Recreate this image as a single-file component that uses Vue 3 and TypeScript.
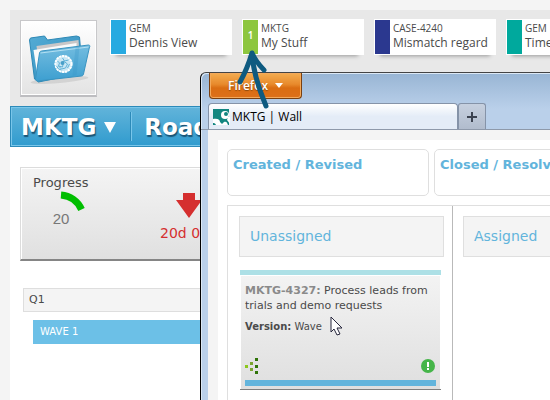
<script setup lang="ts">
interface Shortcut {
  project: string
  title: string
  color: string
  badge?: string
}

const shortcuts: Shortcut[] = [
  { project: 'GEM', title: 'Dennis View', color: '#27aae1' },
  { project: 'MKTG', title: 'My Stuff', color: '#8dc63f', badge: '1' },
  { project: 'CASE-4240', title: 'Mismatch regard', color: '#2b388f' },
  { project: 'GEM', title: 'Time', color: '#00a99d' },
]

const statuses: string[] = ['Created / Revised', 'Closed / Resolved']
</script>

<template>
  <div class="desktop">
    <main class="app">
      <header class="top">
        <a class="logo" href="#" aria-label="Home">
          <svg width="70" height="70" viewBox="0 0 70 70">
            <defs>
              <linearGradient id="front" x1="0" y1="0" x2="0" y2="1">
                <stop offset="0" stop-color="#74bde0" />
                <stop offset="1" stop-color="#3d9fd0" />
              </linearGradient>
              <linearGradient id="back" x1="0" y1="0" x2="1" y2="1">
                <stop offset="0" stop-color="#54abd4" />
                <stop offset="1" stop-color="#2f8dbd" />
              </linearGradient>
            </defs>
            <ellipse cx="36" cy="57" rx="29" ry="3" fill="#c4c4c4" opacity=".6" transform="rotate(-5 36 57)" />
            <path d="M6 17l1-2 14-2 3 4 29-4 3 1 3 36-44 9-4-3z" fill="url(#back)" stroke="#2d88b5" />
            <path d="M13 23l42-6 2 26-40 9z" fill="#c9c7c8" />
            <path d="M10 27l43-7v24L14 54z" fill="#fafafa" />
            <path d="M16 30c0-1 1-2 2-2l47-6c1 0 2 1 1 2l-6 27c0 1-1 2-2 2l-44 5c-1 0-2-1-2-2z" fill="url(#front)" stroke="#3a94c1" />
            <path d="M17 30l48-6" stroke="#b4e0f2" fill="none" />
            <path d="M52 25l4-1-3 28-4 1z" fill="#3795c8" opacity=".3" />
            <circle cx="40" cy="41" r="9" fill="#c9e7f4" />
            <circle cx="40" cy="41" r="8" fill="none" stroke="#fff" stroke-width="2" stroke-dasharray="2 1" />
            <path d="M34 38l2 2-1 3 4 1 1-6 4 3-2 4-4 1-3-3M39 35l2 3 4-1M33 43l2 3 3 1M44 45l2-4" fill="none" stroke="#61b2d7" />
            <circle cx="39" cy="40" r="2" fill="#499fc9" />
          </svg>
        </a>
        <nav class="shortcuts">
          <a v-for="(s, i) in shortcuts" :key="i" class="shortcut" href="#">
            <span class="stripe" :style="{ background: s.color }">{{ s.badge }}</span>
            <span class="label">
              <span class="project">{{ s.project }}</span>
              <span class="name">{{ s.title }}</span>
            </span>
          </a>
        </nav>
      </header>

      <nav class="menu">
        <button type="button" class="menu-project">
          MKTG
          <svg width="12" height="12" viewBox="0 0 12 12"><path d="M0 1h12L6 12z" fill="#fff" /></svg>
        </button>
        <a class="menu-link" href="#">Road</a>
      </nav>

      <div class="content">
        <section class="stats">
          <div class="stat">
            <h2>Progress</h2>
            <div class="gauge">
              <svg width="56" height="28" viewBox="0 0 56 28">
                <path d="M28 4A24.500 24.500 0 0 1 48.500 18.500" fill="none" stroke="#00be00" stroke-width="7" />
              </svg>
              <span>20</span>
            </div>
          </div>
          <div class="trend">
            <svg width="26" height="25" viewBox="0 0 26 25"><path d="M7 0h12v7h7L13 25 0 7h7z" fill="#d52f2f" /></svg>
            <span>20d 0h</span>
          </div>
        </section>
        <div class="quarter">Q1</div>
        <a class="wave" href="#">WAVE 1</a>
      </div>
    </main>

    <section class="window">
      <div class="titlebar">
        <button type="button" class="firefox">
          Firefox
          <svg width="8" height="5" viewBox="0 0 8 5"><path d="M0 0h8L4 5z" fill="#fff" /></svg>
        </button>
      </div>
      <div class="tabs">
        <button type="button" class="tab">
          <svg width="17" height="16" viewBox="0 0 17 16">
            <path d="M0 0h16v16H0z" fill="#128680" />
            <path d="M0 10c5-1 7 1 7 3l2 2 2-2c2-1 3 0 4 3H3c-1-2-2-2-3-2z" fill="#fff" />
            <circle cx="12" cy="6" r="4" fill="#fff" />
            <circle cx="13" cy="5" r="2" fill="#128680" />
            <path d="M15 8h2v7l-3-4z" fill="#fff" />
          </svg>
          MKTG | Wall
        </button>
        <button type="button" class="new-tab" aria-label="New tab">
          <svg width="10" height="10" viewBox="0 0 10 10"><path d="M5 0v10M0 5h10" stroke="#3b4250" stroke-width="2" /></svg>
        </button>
      </div>

      <div class="viewport">
        <div class="wall">
          <div class="statuses">
            <h3 v-for="s in statuses" :key="s" class="status">{{ s }}</h3>
          </div>
          <div class="columns">
            <div class="column">
              <h4>Unassigned</h4>
              <article class="ticket">
                <p class="summary"><a href="#">MKTG-4327:</a> Process leads from trials and demo requests</p>
                <p class="version"><b>Version:</b> Wave</p>
                <div class="ticket-icons">
                  <svg width="14" height="16" viewBox="0 0 14 16">
                    <path d="M0 7h3v3H0z" fill="#8cc81e" />
                    <path d="M5 4h3v3H5zM5 10h3v3H5z" fill="#79a52d" />
                    <path d="M10 0h3v3h-3zM10 7h3v3h-3zM10 13h3v3h-3z" fill="#2f7408" />
                  </svg>
                  <svg width="14" height="14" viewBox="0 0 14 14">
                    <circle cx="7" cy="7" r="7" fill="#45b549" />
                    <path d="M6 3h2v5H6zM6 9h2v2H6z" fill="#fff" />
                  </svg>
                </div>
                <div class="ticket-bar"></div>
              </article>
            </div>
            <div class="column">
              <h4>Assigned</h4>
            </div>
          </div>
        </div>
      </div>
    </section>

    <svg class="pointer-arrow" width="34" height="62" viewBox="0 0 34 62">
      <path d="M3 34C8 25 12 15 15 5c3 7 7 12 12 17M15 5c1 18 6 34 14 53" fill="none" stroke="#0e5a80" stroke-width="5" stroke-linecap="round" stroke-linejoin="round" />
    </svg>
    <svg class="cursor" width="13" height="20" viewBox="0 0 13 20">
      <path d="M1 1v15l3-3 3 6 3-1-3-6h5z" fill="#fff" stroke="#26263c" />
    </svg>
  </div>
</template>

<style>
body {
  margin: 0;
  background: #f4f4f4;
}
</style>

<style scoped>
.desktop {
  position: relative;
  box-sizing: border-box;
  display: flex;
  min-height: 100vh;
  padding: 10px 0 0 10px;
  overflow: hidden;
  background: #f4f4f4;
  font-family: "DejaVu Sans", sans-serif;
  color: #4a4a4a;
}
svg {
  display: block;
  flex: none;
}
a {
  color: inherit;
  text-decoration: none;
}
button {
  margin: 0;
  padding: 0;
  border: 0;
  font: inherit;
  color: inherit;
  cursor: pointer;
}
h2, h3, h4, p {
  margin: 0;
  font-weight: normal;
}
.app {
  flex: 1;
  min-width: 0;
  display: flex;
  flex-direction: column;
  background: #fff;
}
.top {
  display: flex;
  gap: 13px;
  padding: 9px 0 9px 10px;
  background: #e8e8e8;
}
.logo {
  flex: none;
  margin-top: 1px;
  padding: 2px;
  border: 1px solid #c8c8ca;
  border-bottom: 2px solid #bdbdc0;
  background: linear-gradient(#fff, #e3e3e3);
  box-shadow: inset 0 0 0 1px #fff;
}
.logo svg {
  width: 71px;
  height: 70px;
}
.shortcuts {
  display: flex;
  flex: 1;
  gap: 10px;
  min-width: 0;
  overflow: hidden;
}
.shortcut {
  flex: none;
  box-sizing: border-box;
  display: flex;
  width: 122px;
  height: 36px;
  padding: 1px;
  background: #fff;
  box-shadow: 0 7px 4px -6px #999;
  font-family: "Open Sans", sans-serif;
}
.stripe {
  width: 15px;
  font-size: 10px;
  font-weight: 600;
  line-height: 31px;
  text-align: center;
  color: #fff;
}
.label {
  display: flex;
  flex-direction: column;
  padding: 1px 0 0 3px;
  white-space: nowrap;
}
.project {
  font-size: 10px;
  line-height: 14px;
}
.name {
  font-size: 12px;
  line-height: 15px;
}
.menu {
  display: flex;
  align-items: center;
  box-sizing: border-box;
  height: 41px;
  padding-left: 10px;
  border: 1px solid #2c8ab9;
  border-right: 0;
  background: linear-gradient(#62b4da, #309bce);
  box-shadow: inset 0 0 0 1px #79c6ea;
  font-size: 23px;
  font-weight: bold;
  line-height: 26px;
  color: #fff;
  text-shadow: 1px 2px 1px #1a5576;
}
.menu-project {
  display: flex;
  align-items: center;
  gap: 8px;
  height: 29px;
  padding-right: 14px;
  border-right: 1px solid #2c8ab9;
  background: none;
  box-shadow: 1px 0 #79c6ea;
  text-shadow: inherit;
}
.menu-link {
  padding-left: 13px;
}
.content {
  padding: 20px 0 20px 10px;
}
.stats {
  box-sizing: border-box;
  display: flex;
  height: 94px;
  gap: 71px;
  padding: 7px 11px;
  border: 1px solid #dcdcdc;
  border-bottom: 2px solid #858585;
  background: linear-gradient(#f4f4f4, #e0e0e0);
  box-shadow: inset 1px 1px #fff;
}
.stat h2 {
  font-size: 13px;
  line-height: 16px;
  padding-left: 1px;
}
.gauge {
  display: flex;
  flex-direction: column;
  align-items: center;
  padding-left: 1px;
  font: 15px/16px "Liberation Sans", sans-serif;
  color: #777;
}
.gauge svg {
  margin-bottom: -8px;
}
.trend {
  display: flex;
  flex-direction: column;
  gap: 6px;
  padding-top: 18px;
  font-size: 14px;
  line-height: 18px;
  color: #d52f2f;
  white-space: nowrap;
}
.trend svg {
  margin-left: 16px;
}
.quarter {
  margin: 27px 0 8px 3px;
  padding-left: 5px;
  border: 1px solid #dedede;
  background: #f4f4f4;
  font-size: 11px;
  line-height: 22px;
}
.wave {
  display: block;
  margin-left: 13px;
  padding-left: 7px;
  background: #6cc0e7;
  font-size: 10px;
  line-height: 24px;
  color: #fff;
}
.window {
  position: absolute;
  inset: 72px 0 0 200px;
  display: flex;
  flex-direction: column;
  overflow: hidden;
  border-top: 1px solid #444;
  border-left: 1px solid #000;
  border-top-left-radius: 6px;
  background: linear-gradient(#98b5d4, #bad0ea 36px, #bad0ea);
  box-shadow: inset 1px 1px #dbe8f5;
}
.titlebar {
  padding-left: 8px;
}
.firefox {
  box-sizing: border-box;
  display: flex;
  align-items: center;
  gap: 7px;
  height: 26px;
  padding: 0 18px;
  border: 1px solid #7a4010;
  border-top: 0;
  border-radius: 0 0 4px 4px;
  background: linear-gradient(#f3ad51, #e88a2c 45%, #da6d12 60%, #dc701a);
  box-shadow: inset 0 0 0 1px #f3a95b;
  font-family: "Open Sans", sans-serif;
  font-size: 12px;
  font-weight: 600;
  color: #fff;
  text-shadow: 0 1px 1px #8a4a10;
}
.tabs {
  display: flex;
  padding: 4px 0 0 7px;
  border-bottom: 1px solid #8e99aa;
}
.tab {
  flex: none;
  box-sizing: border-box;
  display: flex;
  align-items: center;
  gap: 2px;
  width: 250px;
  height: 26px;
  padding-left: 4px;
  border: 1px solid #8593a8;
  border-bottom: 0;
  border-radius: 4px 4px 0 0;
  background: linear-gradient(#fff, #e4ecf7 50%);
  font-family: "Open Sans", sans-serif;
  font-size: 12px;
  color: #000;
}
.new-tab {
  flex: none;
  box-sizing: border-box;
  display: flex;
  align-items: center;
  justify-content: center;
  width: 28px;
  height: 26px;
  border: 1px solid #8593a8;
  border-bottom: 0;
  border-radius: 3px 3px 0 0;
  background: linear-gradient(#c6d0df, #b1bccd);
}
.viewport {
  flex: 1;
  display: flex;
  flex-direction: column;
  margin-left: 7px;
  padding: 10px 0 0 10px;
  background: #f4f4f4;
}
.wall {
  flex: 1;
  display: flex;
  flex-direction: column;
  padding: 9px 0 0 9px;
  background: #fff;
}
.statuses {
  display: flex;
  gap: 5px;
  margin-bottom: 9px;
}
.status {
  flex: none;
  box-sizing: border-box;
  width: 202px;
  height: 47px;
  padding: 7px 5px;
  border: 1px solid #dfdfdf;
  border-radius: 5px;
  font-size: 13px;
  font-weight: bold;
  line-height: 16px;
  white-space: nowrap;
  color: #62b4dc;
}
.columns {
  flex: 1;
  display: flex;
  border-top: 1px solid #dfdfdf;
  border-left: 1px solid #dfdfdf;
}
.column {
  flex: none;
  box-sizing: border-box;
  width: 225px;
  padding: 10px 8px 10px 11px;
  border-right: 1px solid #b9b9b9;
}
.column + .column {
  padding-left: 10px;
}
.column h4 {
  padding-left: 10px;
  border: 1px solid #dfdfdf;
  background: #f4f4f4;
  font-size: 14px;
  line-height: 39px;
  color: #62b4dc;
}
.ticket {
  margin: 13px 3px 0 1px;
  padding: 8px 5px 3px;
  border-top: 5px solid #ade0e6;
  border-bottom: 1px solid #7f7f7f;
  background: linear-gradient(#f3f3f3, #dfdfdf);
  box-shadow: inset 1px 1px #fff, inset -1px 0 #fff;
}
.summary {
  font-size: 11px;
  line-height: 15px;
}
.summary a {
  font-weight: bold;
  color: #8a8a8a;
}
.version {
  padding-top: 6px;
  font-size: 10px;
  line-height: 15px;
}
.ticket-icons {
  display: flex;
  align-items: center;
  justify-content: space-between;
  margin: 24px 0 6px;
  padding-right: 1px;
}
.ticket-bar {
  height: 6px;
  background: #62b4dc;
}
.pointer-arrow {
  position: absolute;
  left: 237px;
  top: 48px;
}
.cursor {
  position: absolute;
  left: 330px;
  top: 316px;
}
</style>
